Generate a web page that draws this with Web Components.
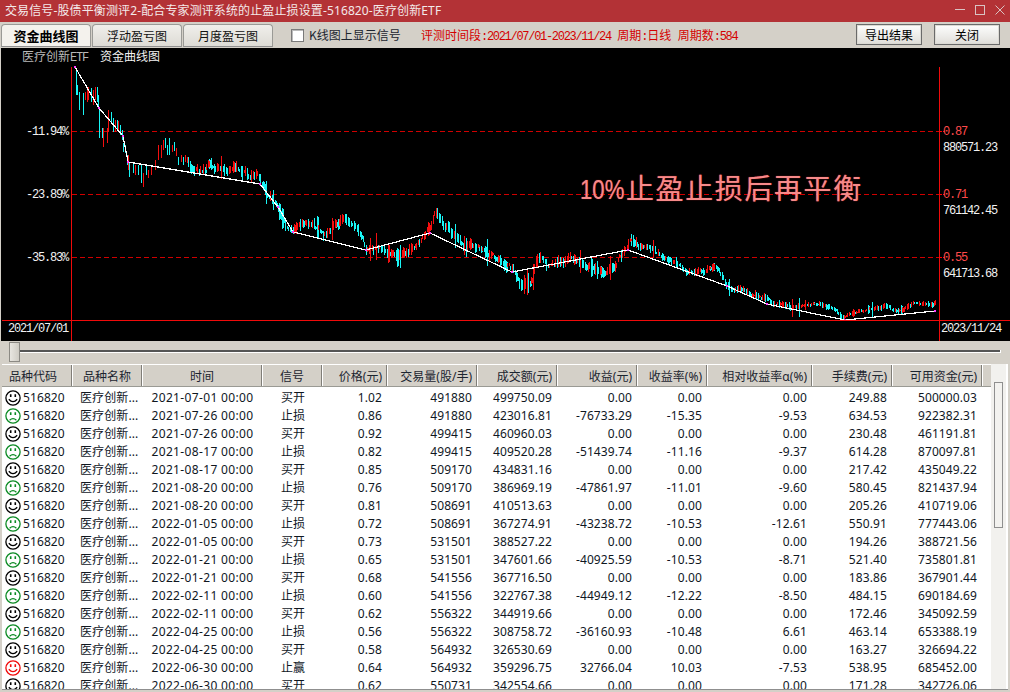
<!DOCTYPE html>
<html lang="zh-CN">
<head>
<meta charset="utf-8">
<title>交易信号</title>
<style>
html,body{margin:0;padding:0;height:100%;overflow:hidden;background:#d4d0c8}
body{font:12px "Noto Sans","Noto Sans CJK SC",sans-serif;color:#000}
</style>
</head>
<body>
<app-window>
  <title-bar>交易信号-股债平衡测评2-配合专家测评系统的止盈止损设置-516820-医疗创新ETF</title-bar>
  <tool-bar></tool-bar>
  <equity-chart></equity-chart>
  <slider-bar></slider-bar>
  <data-table></data-table>
</app-window>
<script>
const el=(html)=>{const t=document.createElement('template');t.innerHTML=html;return t.content};
class Base extends HTMLElement{
  render(html){this.attachShadow({mode:'open'}).appendChild(el(html));}
}
customElements.define('app-window',class extends Base{connectedCallback(){this.render(`<style>
:host{display:flex;flex-direction:column;width:1010px;height:692px;overflow:hidden;background:#d4d0c8}
</style><slot></slot>`)}});

customElements.define('title-bar',class extends Base{connectedCallback(){this.render(`<style>
:host{display:flex;align-items:center;height:22px;flex:none;background:#b33236;color:#f3e9e9;padding-left:5px;font:12px "Noto Sans","Noto Sans CJK SC",sans-serif;letter-spacing:.12px}
.t{flex:1;white-space:nowrap;line-height:22px}
svg{flex:none;display:block}
</style><div class="t"><slot></slot></div>
<svg width="60" height="22" viewBox="950 0 60 22" fill="none" stroke="#d9c3c3" stroke-width="1" shape-rendering="crispEdges">
<path d="M955 9.5h10"/><rect x="975.5" y="5.5" width="9" height="9"/>
<path d="M995.5 5.5l9 9M1004.5 5.5l-9 9" shape-rendering="auto"/></svg>`)}});

customElements.define('tab-item',class extends Base{connectedCallback(){this.render(`<style>
:host{display:flex;align-items:center;justify-content:center;box-sizing:border-box;width:90px;height:23px;border:1px solid #9a9a96;border-bottom:1px solid #8f8f8f;border-radius:4px 4px 0 0;background:linear-gradient(#f0efeb,#dddbd5);font:12px "Noto Sans CJK SC",sans-serif;color:#111}
:host([active]){background:#f4f2ed;font-weight:700;font-size:13px;color:#000}
</style><slot></slot>`)}});

customElements.define('flat-button',class extends Base{connectedCallback(){this.render(`<style>
:host{display:flex;align-items:center;justify-content:center;box-sizing:border-box;width:66px;height:21px;border:1px solid #6a6a6a;background:linear-gradient(#fdfdfd,#ecebe8 60%,#dfddd8);font:12px "Noto Sans CJK SC",sans-serif;color:#000;box-shadow:inset 0 0 0 1px #dcdad4}
</style><slot></slot>`)}});

customElements.define('tool-bar',class extends Base{connectedCallback(){this.render(`<style>
:host{display:flex;align-items:flex-start;height:26px;flex:none;background:#d4d0c8;padding-left:1px;box-sizing:border-box;font:12px "Noto Sans CJK SC",sans-serif}
.tabs{display:flex;gap:1px;margin-top:2px}
.chk{box-sizing:border-box;width:13px;height:13px;border:1px solid #7a7a7a;background:#fff;box-shadow:inset 1px 1px 0 #bbb;margin:7px 5px 0 18px;flex:none}
.lbl{margin-top:5px;line-height:16px;color:#1c2530;width:112px;white-space:nowrap}
.red{margin-top:5px;line-height:16px;color:#d40000;width:435px;white-space:nowrap}
.m{font-family:"Liberation Mono",monospace;letter-spacing:-1.3px}
.btns{display:flex;gap:12px;margin-top:2px}
i{font-style:normal;display:inline-block;width:6.5px}
</style>
<div class="tabs"><tab-item active>资金曲线图</tab-item><tab-item>浮动盈亏图</tab-item><tab-item>月度盈亏图</tab-item></div>
<div class="chk"></div><div class="lbl">K线图上显示信号</div>
<div class="red">评测时间段<span class="m">:2021/07/01-2023/11/24</span><i></i>周期<span class="m">:</span>日线<i></i>周期数<span class="m">:584</span></div>
<div class="btns"><flat-button>导出结果</flat-button><flat-button>关闭</flat-button></div>`)}});

/* chart data ------------------------------------------------------- */
const hand=[[76,68,95,'c'],[77,85,95,'c'],[79,92,110,'c'],[83,93,115,'c'],[85,92,100,'r'],[87,87,102,'r'],[88,87,100,'r'],[91,88,102,'c'],[93,90,105,'r'],[95,87,100,'r'],[97,87,102,'c'],[98,95,108,'c'],[99,108,138,'c'],[102,128,138,'c'],[103,128,147,'r'],[107,128,143,'r'],[108,110,132,'r'],[111,112,123,'c'],[113,118,132,'c'],[115,120,132,'r'],[117,120,130,'c'],[118,121,132,'r'],[120,125,135,'c'],[122,130,140,'c'],[123,143,152,'c'],[125,145,153,'c'],[127,155,165,'c'],[128,155,170,'r'],[129,162,177,'c'],[133,164,173,'c'],[135,165,175,'r'],[138,165,175,'c'],[141,165,183,'c'],[143,173,187,'r'],[146,165,175,'c'],[148,170,178,'r'],[151,167,175,'r'],[155,160,170,'r'],[158,145,160,'r'],[161,145,158,'r'],[163,140,150,'r'],[165,138,148,'c'],[167,145,155,'c'],[169,138,155,'c'],[172,145,152,'r'],[174,142,151,'c'],[176,148,156,'r'],[178,157,165,'c'],[181,155,162,'r'],[183,157,165,'c'],[185,155,162,'r'],[187,157,163,'r'],[188,157,167,'c']];
const path=[[190,165],[200,172],[205,170],[210,162],[216,168],[222,166],[230,170],[237,168],[245,172],[250,175],[257,177],[262,186],[268,193],[275,202],[280,216],[286,226],[293,230],[300,226],[310,222],[318,230],[323,236],[330,228],[337,223],[343,220],[350,224],[357,229],[362,240],[367,250],[373,249],[380,247],[388,254],[397,257],[405,252],[413,247],[423,236],[430,226],[435,212],[443,223],[453,234],[463,248],[470,246],[477,246],[485,250],[493,257],[502,261],[510,266],[515,274],[520,283],[526,285],[532,281],[537,260],[542,262],[547,267],[558,261],[570,258],[580,264],[592,266],[605,271],[612,266],[620,257],[626,247],[630,238],[635,240],[640,245],[648,249],[657,253],[665,258],[673,263],[680,267],[688,273],[695,274],[700,272],[705,272],[710,270],[717,268],[722,276],[727,285],[735,288],[743,290],[752,294],[760,297],[770,301],[777,303],[785,305],[793,308],[805,306],[820,303],[830,308],[838,313],[843,317],[848,314],[853,313],[865,311],[875,309],[887,305],[893,310],[897,313],[903,308],[910,305],[915,303],[920,302],[928,303],[935,303]];
const line=[[75,67],[99,108],[123,136],[128,162],[260,184],[278,207],[293,232],[366,250],[430,233],[512,272],[628,250],[727,286],[767,304],[845,320],[935,311]];
function buildCandles(){
  let s=20231124;const rnd=()=>{s=(s*1664525+1013904223)>>>0;return s/4294967296};
  const at=x=>{for(let i=1;i<path.length;i++){if(x<=path[i][0]){const a=path[i-1],b=path[i];return a[1]+(b[1]-a[1])*(x-a[0])/(b[0]-a[0])}}return path[path.length-1][1]};
  let red='',cy='';
  const put=(x,t,b,c,w)=>{const seg=`M${x+.5} ${t}V${b}`;const seg2=w?`M${x+1.5} ${t+1}V${b-1}`:'';if(c==='r')red+=seg+seg2;else cy+=seg+seg2};
  hand.forEach(h=>put(h[0],h[1],h[2],h[3],false));
  let noise=0,prev=at(190);
  for(let fx=190;fx<=936;fx+=1.49){
    const x=Math.round(fx);
    noise=noise*.65+(rnd()-.5)*4.4;
    const amp=fx<640?1:(fx<800?.7:.5);
    const c=at(fx)+noise*amp;
    const up=c<prev+(rnd()-.5)*2;prev=c;
    let h=(3+rnd()*8)*amp;
    if(rnd()<.07)h+=(8+rnd()*12)*amp;
    const t=Math.round(c-h*.55),b=Math.round(c+h*.55);
    put(x,t,Math.min(b,321),up?'r':'c',rnd()<.25&&fx<935);
  }
  return {red,cy};
}
customElements.define('equity-chart',class extends Base{connectedCallback(){
  const {red,cy}=buildCandles();
  const pts=line.map(p=>p.join(',')).join(' ');
  const marks=line.map(p=>`<rect x="${p[0]-1}" y="${p[1]-1}" width="2" height="2"/>`).join('');
  const dash=[131,194,257].map(y=>`<path d="M72 ${y+.5}H939" stroke="#d00000" stroke-dasharray="5 3"/><path d="M939 ${y+.5}H945" stroke="#ff0000" stroke-dasharray="3 1"/>`).join('');
  const lab=(x,y,t,c,extra='')=>`<span class="l ${c}" style="left:${x}px;top:${y-48-7}px;${extra}">${t}</span>`;
  this.render(`<style>
:host{display:block;position:relative;flex:none;height:293px;width:1009px;margin-left:1px;background:#000;overflow:hidden}
svg{position:absolute;left:-1px;top:-48px;display:block}
.l{position:absolute;line-height:16px;white-space:nowrap;font:12px/16px "Liberation Mono",monospace;letter-spacing:-1.2px}
.w{color:#f2f2f2}.r{color:#ff4a4a}.g{color:#b8b8b8}
.big{position:absolute;left:579px;top:121px;white-space:nowrap;font:400 28px/36px "Noto Sans CJK SC",sans-serif;letter-spacing:1.6px;color:#f68a8a;text-shadow:0 0 1px #e02c2c}
.big span{display:inline-block;width:46px;font:400 27px/36px "Liberation Sans",sans-serif;letter-spacing:0;transform:scaleX(.82);transform-origin:0 50%;white-space:nowrap}
.c{font-family:"Noto Sans CJK SC",sans-serif;letter-spacing:0}
</style>
<svg width="1010" height="341" viewBox="0 0 1010 341" shape-rendering="crispEdges" fill="none">
${dash}
<path d="${cy}" stroke="#19f5f5"/><path d="${red}" stroke="#f50f0f"/>
<polyline points="${pts}" stroke="#fff" stroke-width="1.2"/>
<g fill="#ff40ff" stroke="none">${marks}</g>
<path d="M71.5 67V341M939.5 67V341M2 320.5H1010" stroke="#f00a0a"/>
</svg>
<span class="l g" style="left:21px;top:0"><span class="c">医疗创新</span>ETF</span>
<span class="l w c" style="left:99px;top:0">资金曲线图</span>
${lab(25,131,'-11.94%','w')}${lab(25,194,'-23.89%','w')}${lab(25,257,'-35.83%','w')}
${lab(942,131,'0.87','r')}${lab(942,147,'880571.23','w')}
${lab(942,194,'0.71','r')}${lab(942,210,'761142.45','w')}
${lab(942,257,'0.55','r')}${lab(942,273,'641713.68','w')}
${lab(7,328,'2021/07/01','w')}${lab(940,328,'2023/11/24','w')}
<div class="big"><span>10%</span>止盈止损后再平衡</div>`)}});

customElements.define('slider-bar',class extends Base{connectedCallback(){this.render(`<style>
:host{display:block;flex:none;height:23px;background:#d4d0c8;box-sizing:border-box;padding:1px 9px 0 9px;position:relative}
.track{margin:8px 0 0 0;height:2px;background:#555;border-bottom:1px solid #fff;border-right:1px solid #fff}
.thumb{position:absolute;left:9px;top:1px;width:11px;height:20px;box-sizing:border-box;background:linear-gradient(90deg,#e8e6e0,#cfccc4);border:1px solid #8c8a84}
</style><div class="track"></div><div class="thumb"></div>`)}});

const smile={k:'#000',g:'#0a8a22',r:'#f00808'};
customElements.define('mood-icon',class extends Base{connectedCallback(){
  const tone=this.getAttribute('tone')||'k';
  const c=smile[tone];
  const mm=tone==='g'?'M4.6 12.2Q8 9 11.4 12.2':'M3.8 9.2Q8 14 12.2 9.2';
  this.render(`<style>:host{display:block;width:16px;height:16px;flex:none}svg{display:block}</style>
<svg width="16" height="16" viewBox="0 0 16 16" fill="none" stroke="${c}"><circle cx="8" cy="8" r="7.1" stroke-width="1.3"/><path d="${mm}" stroke-width="1.3"/><path d="M5.7 4.2v2.8M10.3 4.2v2.8" stroke-width="1.6"/></svg>`)}});

const COLS='70px 70px 120px 60px 65px 90px 80px 80px 70px 105px 80px 90px';
customElements.define('table-head',class extends Base{connectedCallback(){
  const names=['品种代码','品种名称','时间','信号','价格(元)','交易量(股/手)','成交额(元)','收益(元)','收益率(%)','相对收益率α(%)','手续费(元)','可用资金(元)'];
  const cells=names.map((n,i)=>`<div class="h ${i<4?'ce':'ri'}${i===0?' f':''}">${n}</div>`).join('');
  this.render(`<style>
:host{display:grid;grid-template-columns:${COLS} 1fr;height:23px;flex:none;background:#d4d0c8;box-sizing:border-box;border-top:1px solid #fff;border-bottom:1px solid #9a9a94;color:#1c2530;font:12px "Noto Sans","Noto Sans CJK SC",sans-serif}
.h{box-sizing:border-box;line-height:22px;padding-top:1px;height:21px;border-right:1px solid #807e78;border-left:1px solid #fff;white-space:nowrap}
.ce{text-align:center}.ri{text-align:right;padding-right:4px}
.f{text-align:left;padding-left:7px;border-left:0}
.rest{border-left:1px solid #fff}
</style>${cells}<div class="rest"></div>`)}});

customElements.define('table-row',class extends Base{connectedCallback(){
  const d=JSON.parse(this.getAttribute('data'));
  const [tone,date,sig,...nums]=d;
  const rn=nums.map(n=>`<div class="n">${n}</div>`).join('');
  this.render(`<style>
:host{display:grid;grid-template-columns:${COLS};height:18px;line-height:18px;align-items:center;white-space:nowrap;color:#10171f;font:12px/18px "Noto Sans","Noto Sans CJK SC",sans-serif;letter-spacing:.1px}
.n{text-align:right;padding-right:5px}
.code{display:flex;align-items:center;padding-left:3px;gap:2px}
.ce{text-align:center}.nm{padding-left:8px}
.t{letter-spacing:.35px;padding-left:1px}.sg{padding-left:2px}
</style>
<div class="code"><mood-icon tone="${tone}"></mood-icon><span>516820</span></div>
<div class="nm">医疗创新...</div><div class="ce t">${date} 00:00</div><div class="ce sg">${sig}</div>${rn}`)}});

const ROWS=[
['k','2021-07-01','买开','1.02','491880','499750.09','0.00','0.00','0.00','249.88','500000.03'],
['g','2021-07-26','止损','0.86','491880','423016.81','-76733.29','-15.35','-9.53','634.53','922382.31'],
['k','2021-07-26','买开','0.92','499415','460960.03','0.00','0.00','0.00','230.48','461191.81'],
['g','2021-08-17','止损','0.82','499415','409520.28','-51439.74','-11.16','-9.37','614.28','870097.81'],
['k','2021-08-17','买开','0.85','509170','434831.16','0.00','0.00','0.00','217.42','435049.22'],
['g','2021-08-20','止损','0.76','509170','386969.19','-47861.97','-11.01','-9.60','580.45','821437.94'],
['k','2021-08-20','买开','0.81','508691','410513.63','0.00','0.00','0.00','205.26','410719.06'],
['g','2022-01-05','止损','0.72','508691','367274.91','-43238.72','-10.53','-12.61','550.91','777443.06'],
['k','2022-01-05','买开','0.73','531501','388527.22','0.00','0.00','0.00','194.26','388721.56'],
['g','2022-01-21','止损','0.65','531501','347601.66','-40925.59','-10.53','-8.71','521.40','735801.81'],
['k','2022-01-21','买开','0.68','541556','367716.50','0.00','0.00','0.00','183.86','367901.44'],
['g','2022-02-11','止损','0.60','541556','322767.38','-44949.12','-12.22','-8.50','484.15','690184.69'],
['k','2022-02-11','买开','0.62','556322','344919.66','0.00','0.00','0.00','172.46','345092.59'],
['g','2022-04-25','止损','0.56','556322','308758.72','-36160.93','-10.48','6.61','463.14','653388.19'],
['k','2022-04-25','买开','0.58','564932','326530.69','0.00','0.00','0.00','163.27','326694.22'],
['r','2022-06-30','止赢','0.64','564932','359296.75','32766.04','10.03','-7.53','538.95','685452.00'],
['k','2022-06-30','买开','0.62','550731','342554.66','0.00','0.00','0.00','171.28','342726.06']];

customElements.define('data-table',class extends Base{connectedCallback(){
  const rows=ROWS.map(r=>`<table-row data='${JSON.stringify(r)}'></table-row>`).join('');
  this.render(`<style>
:host{display:flex;flex:none;height:326px;width:1006px;margin-left:2px;box-sizing:border-box;border-bottom:1px solid #8f8f8f;background:#fff;overflow:hidden}
.main{flex:none;width:989px;display:flex;flex-direction:column;overflow:hidden}
.body{flex:1;overflow:hidden;padding-top:2px}
.sb{flex:none;width:15px;background:#f2f1ee;box-sizing:border-box;padding:18px 3px 0 3px}
.th{height:146px;box-sizing:border-box;border:1px solid #8f8f8f;background:#f3f2ef}
</style>
<div class="main"><table-head></table-head><div class="body">${rows}</div></div>
<div class="sb"><div class="th"></div></div>`)}});
</script>
</body>
</html>
